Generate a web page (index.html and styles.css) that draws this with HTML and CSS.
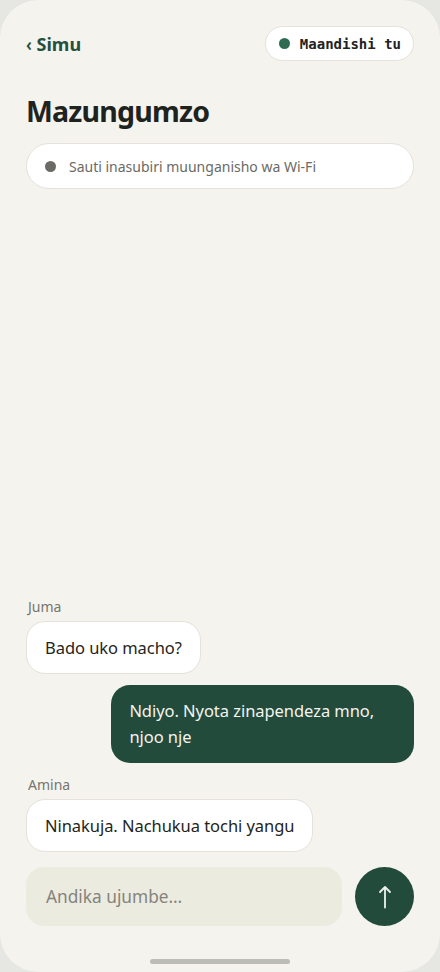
FILE: index.html
```html
<!DOCTYPE html>
<html lang="sw">
<head>
    <meta charset="UTF-8">
    <title>Mazungumzo</title>
    <link rel="stylesheet" href="styles.css">
</head>
<body>
<div class="phone">
    <div class="top-row">
        <a class="back" href="#"><span class="chev">&lsaquo;</span> Simu</a>
        <div class="mode-pill"><span class="mode-dot"></span>Maandishi tu</div>
    </div>
    <h1 class="title">Mazungumzo</h1>
    <div class="status-bar"><span class="status-dot"></span>Sauti inasubiri muunganisho wa Wi-Fi</div>

    <div class="messages">
        <div class="sender">Juma</div>
        <div class="bubble them">Bado uko macho?</div>
        <div class="bubble me">Ndiyo. Nyota zinapendeza mno, njoo nje</div>
        <div class="sender">Amina</div>
        <div class="bubble them">Ninakuja. Nachukua tochi yangu</div>
    </div>

    <div class="compose">
        <div class="compose-input">Andika ujumbe…</div>
        <button class="send" aria-label="Tuma">
            <svg width="16" height="24" viewBox="0 0 16 24">
                <path d="M8 22.5V2M3 7L8 2l5 5" fill="none" stroke="#eef2ee" stroke-width="1.8" stroke-linecap="round" stroke-linejoin="round"/>
            </svg>
        </button>
    </div>
    <div class="home-bar"></div>
</div>
</body>
</html>
```

FILE: styles.css
```css
body {
    margin: 0;
    background-color: #e6e6e2;
    font-family: "Noto Sans", Arial, sans-serif;
}

.phone {
    width: 440px;
    height: 972px;
    box-sizing: border-box;
    padding: 26px 26px 8px;
    border-radius: 38px;
    background-color: #f4f3ee;
    display: flex;
    flex-direction: column;
}

.top-row {
    display: flex;
    justify-content: space-between;
    align-items: center;
    height: 35px;
}

.back {
    color: #24503d;
    font-size: 18px;
    font-weight: 700;
    text-decoration: none;
}

.chev {
    font-size: 17px;
    font-weight: 600;
}

.mode-pill {
    display: flex;
    align-items: center;
    gap: 10px;
    height: 35px;
    box-sizing: border-box;
    padding: 0 12px 0 13px;
    background-color: #fff;
    border: 1px solid #e4e2d9;
    border-radius: 18px;
    font-family: "DejaVu Sans Mono", monospace;
    font-size: 14px;
    font-weight: 700;
    color: #222;
}

.mode-dot {
    width: 11px;
    height: 11px;
    border-radius: 50%;
    background-color: #2e6b55;
}

.title {
    margin: 32px 0 0;
    font-size: 28.5px;
    line-height: 36px;
    letter-spacing: -0.8px;
    font-weight: 700;
    color: #1e2320;
}

.status-bar {
    display: flex;
    align-items: center;
    gap: 13px;
    height: 46px;
    box-sizing: border-box;
    margin-top: 14px;
    padding: 0 18px;
    background-color: #fff;
    border: 1px solid #e4e2d9;
    border-radius: 23px;
    font-size: 14px;
    color: #6b6a65;
}

.status-dot {
    width: 11px;
    height: 11px;
    border-radius: 50%;
    background-color: #6b6a65;
}

.messages {
    flex: 1;
    display: flex;
    flex-direction: column;
    justify-content: flex-end;
    align-items: flex-start;
}

.sender {
    margin: 0 0 4px 2px;
    font-size: 14px;
    line-height: 20px;
    color: #77766f;
}

.bubble {
    max-width: 78%;
    box-sizing: border-box;
    padding: 12.5px 18px;
    border-radius: 19px;
    font-size: 16.5px;
    line-height: 26px;
    letter-spacing: -0.05px;
    margin-bottom: 11px;
}

.them {
    background-color: #fff;
    border: 1px solid #e4e2d9;
    color: #1f2420;
}

.me {
    align-self: flex-end;
    background-color: #234b3c;
    color: #f4f3ee;
    padding: 13px 18px;
    margin-bottom: 12px;
}

.compose {
    display: flex;
    align-items: center;
    gap: 13px;
    margin-top: 4px;
}

.compose-input {
    flex: 1;
    height: 59px;
    box-sizing: border-box;
    padding: 0 20px;
    display: flex;
    align-items: center;
    border-radius: 18px;
    background-color: #ecebe0;
    font-size: 17.3px;
    color: #85847c;
}

.send {
    width: 59px;
    height: 59px;
    border: none;
    border-radius: 50%;
    background-color: #234b3c;
    padding: 0;
    display: flex;
    align-items: center;
    justify-content: center;
}

.home-bar {
    width: 140px;
    height: 5px;
    margin: 33px auto 0;
    border-radius: 3px;
    background-color: #bdbdb8;
}
```
